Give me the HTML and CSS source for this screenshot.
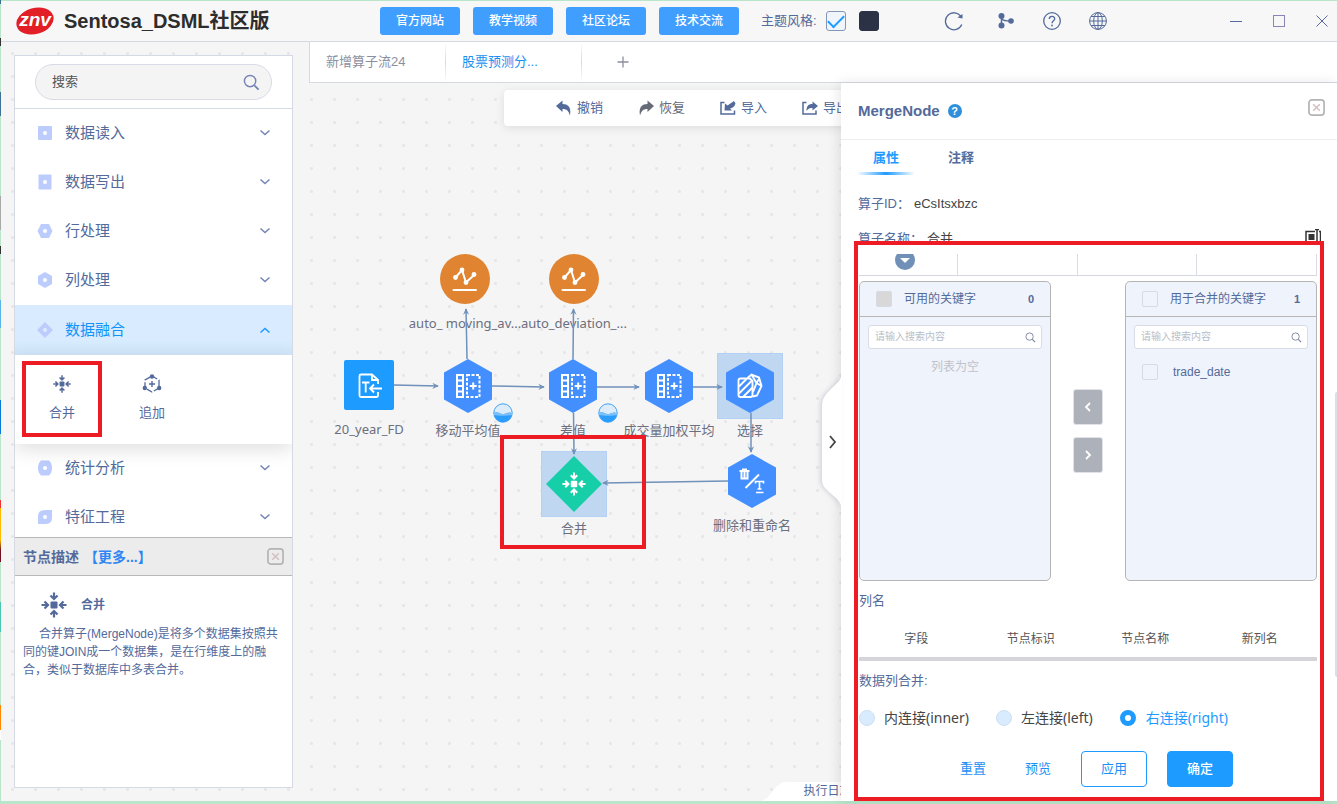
FILE: index.html
```html
<!DOCTYPE html>
<html lang="zh-CN">
<head>
<meta charset="utf-8">
<title>Sentosa_DSML社区版</title>
<link rel="stylesheet" href="styles.css">
</head>
<body>
<svg class="defs" aria-hidden="true">
  <defs>
    <symbol id="i-down" viewBox="0 0 12 8"><path d="M1.5 1.5L6 5.5L10.500 1.500" fill="none" stroke="currentColor" stroke-width="1.500"/></symbol>
    <symbol id="i-search" viewBox="0 0 18 18"><circle cx="7.500" cy="7.500" r="6" fill="none" stroke="currentColor" stroke-width="1.500"/><path d="M12 12L16.500 16.500" stroke="currentColor" stroke-width="2"/></symbol>
    <symbol id="i-merge" viewBox="0 0 26 26"><rect x="9.500" y="9.500" width="7" height="7" rx="1" fill="currentColor"/><g fill="none" stroke="currentColor" stroke-width="2.200"><path d="M13 0.500V7M9.500 3.500L13 7L16.500 3.500"/><path d="M13 25.500V19M9.500 22.500L13 19L16.500 22.500"/><path d="M0.500 13H7M3.500 9.500L7 13L3.500 16.500"/><path d="M25.500 13H19M22.500 9.500L19 13L22.500 16.500"/></g></symbol>
    <symbol id="i-close" viewBox="0 0 18 18"><rect x="1" y="1" width="16" height="16" rx="3" fill="none" stroke="#b4b4b4" stroke-width="1.800"/><path d="M5.500 5.500L12.500 12.500M12.500 5.500L5.500 12.500" stroke="#d3bfbf" stroke-width="1.500"/></symbol>
    <symbol id="i-columns" viewBox="0 0 26 26"><g fill="none" stroke="#fff" stroke-width="2"><path d="M2 2H8V24H2ZM2 7.500H8M2 13H8M2 18.500H8"/><path d="M12 2H24.500V24H12Z" stroke-dasharray="3 1.500"/><path d="M18.200 9.500V16.500M14.700 13H21.700"/></g></symbol>
    <symbol id="i-chart" viewBox="0 0 26 26"><g fill="none" stroke="#fff" stroke-width="2"><path d="M3.500 11.500L10 4L14 16.500L22 9"/><path d="M1.500 24H24" stroke-linecap="round"/></g><g fill="#fff"><circle cx="3.500" cy="11.500" r="2.400"/><circle cx="10" cy="4" r="2.400"/><circle cx="14" cy="16.500" r="2.400"/><circle cx="22" cy="8.500" r="2.400"/></g></symbol>
    <symbol id="i-hex" viewBox="0 0 48 54"><path d="M24 0L48 13.500V40.500L24 54L0 40.500V13.500Z" fill="#448fff"/></symbol>
    <symbol id="i-wave" viewBox="0 0 20 20"><circle cx="10" cy="10" r="9.200" fill="#dcecf8" stroke="#3aa0f5"/><path d="M1 10C5 7.500 7 12 11 11S16 8.500 19 10.500A9 9 0 0 1 1 10Z" fill="#2b9dff"/><path d="M1 10C5 7.500 7 12 11 11S16 8.500 19 10.500V12C15 13 6 13 1 12Z" fill="#7cc0fa"/></symbol>
    <marker id="arrow" viewBox="0 0 8 8" refX="6.500" refY="4" markerWidth="7" markerHeight="7" markerUnits="userSpaceOnUse" orient="auto"><path d="M0 0.500L7.500 4L0 7.500L2.500 4Z" fill="#6f91ba"/></marker>
  </defs>
</svg>
<div class="app">
  <header class="topbar">
    <div class="brand">
      <svg class="logo" viewBox="0 0 38 28" role="img" aria-label="znv"><ellipse cx="19" cy="14" rx="19" ry="13" transform="rotate(-16 19 14)" fill="#e21f26"/><text class="logo-text" x="19" y="19" text-anchor="middle">znv</text></svg>
      <h1 class="title">Sentosa_DSML社区版</h1>
    </div>
    <nav class="links">
      <button class="link-btn">官方网站</button>
      <button class="link-btn">教学视频</button>
      <button class="link-btn">社区论坛</button>
      <button class="link-btn">技术交流</button>
    </nav>
    <div class="theme">
      <label for="light">主题风格:</label>
      <input id="light" class="swatch light" type="checkbox" checked>
      <input class="swatch dark" type="checkbox" aria-label="深色主题">
    </div>
    <div class="tools">
      <button class="tool reload" aria-label="刷新"><svg viewBox="0 0 20 20"><path d="M17 5.500A8.500 8.500 0 1 0 17.800 13.500" fill="none" stroke="currentColor" stroke-width="1.300"/><path d="M18.500 3V7.500L13.500 6.500Z" fill="currentColor"/></svg></button>
      <button class="tool" aria-label="分支"><svg viewBox="0 0 20 20"><g fill="currentColor"><circle cx="5.500" cy="5" r="3"/><circle cx="5.500" cy="14.500" r="3"/><circle cx="15" cy="10" r="2.800"/></g><path d="M5.500 5V14.500M5.500 7C6 10 10 10 15 10" fill="none" stroke="currentColor" stroke-width="1.500"/></svg></button>
      <button class="tool" aria-label="帮助"><svg viewBox="0 0 20 20"><circle cx="10" cy="10" r="8.300" fill="none" stroke="currentColor" stroke-width="1.300"/><path d="M7.300 8C7.300 4.500 12.700 4.500 12.700 7.800C12.700 9.800 10 9.800 10 12.200" fill="none" stroke="currentColor" stroke-width="1.400"/><circle cx="10" cy="14.500" r="0.900" fill="currentColor"/></svg></button>
      <button class="tool" aria-label="语言"><svg viewBox="0 0 20 20"><g fill="none" stroke="currentColor"><circle cx="10" cy="10" r="8.400"/><ellipse cx="10" cy="10" rx="4.300" ry="8.400"/><path d="M10 1.500V18.500M1.500 10H18.500M3 5.500H17M3 14.500H17"/></g></svg></button>
    </div>
    <div class="window">
      <button class="win" aria-label="最小化"><svg viewBox="0 0 14 14"><path d="M1 7.500H13" stroke="currentColor"/></svg></button>
      <button class="win" aria-label="最大化"><svg viewBox="0 0 14 14"><rect x="1.500" y="1.500" width="11" height="11" fill="none" stroke="#8a86b4"/></svg></button>
      <button class="win" aria-label="关闭"><svg viewBox="0 0 14 14"><path d="M1.500 1.500L12.500 12.500M12.500 1.500L1.500 12.500" stroke="currentColor"/></svg></button>
    </div>
  </header>

  <main class="main">
    <aside class="sidebar">
      <div class="search">
        <div class="search-box">
          <input class="search-input" type="text" placeholder="搜索" aria-label="搜索">
          <svg class="search-icon"><use href="#i-search"/></svg>
        </div>
      </div>
      <div class="menu">
        <button class="item"><svg class="shape" viewBox="0 0 16 16"><rect x="1" y="1" width="14" height="14" rx="1"/><circle class="hole" cx="8" cy="8" r="2"/></svg><span>数据读入</span><svg class="chev"><use href="#i-down"/></svg></button>
        <button class="item"><svg class="shape" viewBox="0 0 16 16"><rect x="1.500" y="0.500" width="13" height="15" rx="1"/><circle class="hole" cx="8" cy="8" r="2"/></svg><span>数据写出</span><svg class="chev"><use href="#i-down"/></svg></button>
        <button class="item"><svg class="shape" viewBox="0 0 16 16"><path d="M4 1H12L15.500 8L12 15H4L0.500 8Z"/><circle class="hole" cx="8" cy="8" r="2"/></svg><span>行处理</span><svg class="chev"><use href="#i-down"/></svg></button>
        <button class="item"><svg class="shape" viewBox="0 0 16 16"><path d="M8 0L15 4V12L8 16L1 12V4Z"/><circle class="hole" cx="8" cy="8" r="2"/></svg><span>列处理</span><svg class="chev"><use href="#i-down"/></svg></button>
        <button class="item active"><svg class="shape" viewBox="0 0 16 16"><path d="M8 0L16 8L8 16L0 8Z"/><circle class="hole" cx="8" cy="8" r="2"/></svg><span>数据融合</span><svg class="chev up"><use href="#i-down"/></svg></button>
        <div class="submenu">
          <button class="op marked"><svg class="op-icon" viewBox="0 0 20 20"><use href="#i-merge" x="1" y="1" width="18" height="18"/></svg><span>合并</span></button>
          <button class="op"><svg class="op-icon" viewBox="0 0 20 20"><path d="M10 2L17 6V14L10 18L3 14V6Z" fill="none" stroke="currentColor" stroke-width="1.300" stroke-dasharray="6 2"/><g fill="currentColor"><circle cx="10" cy="2.500" r="2.200"/><circle cx="2.800" cy="14" r="2.200"/><circle cx="17.200" cy="14" r="2.200"/></g><path d="M10 7V13M7 10H13" stroke="currentColor" stroke-width="1.400"/></svg><span>追加</span></button>
        </div>
        <button class="item"><svg class="shape" viewBox="0 0 16 16"><path d="M4 0.500H12Q15 3 15 8T12 15.500H4Q1 13 1 8T4 0.500Z"/><circle class="hole" cx="8" cy="8" r="2"/></svg><span>统计分析</span><svg class="chev"><use href="#i-down"/></svg></button>
        <button class="item"><svg class="shape" viewBox="0 0 16 16"><path d="M1 15V7Q1 1 8 1H15V9Q15 15 8 15Z"/><circle class="hole" cx="8" cy="8" r="2"/></svg><span>特征工程</span><svg class="chev"><use href="#i-down"/></svg></button>
      </div>
      <section class="desc">
        <div class="desc-head">
          <h2 class="desc-title">节点描述</h2><a class="more" href="#">【更多...】</a>
          <button class="close" aria-label="关闭描述"><svg><use href="#i-close"/></svg></button>
        </div>
        <div class="desc-body">
          <h3 class="desc-name"><svg class="desc-icon"><use href="#i-merge"/></svg>合并</h3>
          <p class="desc-text">合并算子(MergeNode)是将多个数据集按照共同的键JOIN成一个数据集，是在行维度上的融合，类似于数据库中多表合并。</p>
        </div>
      </section>
    </aside>

    <div class="workspace">
      <div class="flows">
        <button class="flow">新增算子流24</button>
        <button class="flow current">股票预测分...</button>
        <button class="flow add" aria-label="新增"><svg viewBox="0 0 12 12"><path d="M6 0.500V11.500M0.500 6H11.500" stroke="currentColor" stroke-width="1.300"/></svg></button>
      </div>
      <div class="stage">
        <div class="canvas">
          <div class="node n-file"><span class="box"><svg width="50" height="50" viewBox="0 0 50 50"><rect width="50" height="50" rx="2" fill="#1e9bff"/><g fill="none" stroke="#fff" stroke-width="1.800"><path d="M34 24V20L28 14.500H17Q15.500 14.500 15.500 16V35.500Q15.500 37 17 37H32.500Q34 37 34 35.500V32"/><path d="M28 14.500V20H34"/><path d="M18 22.500H25.500M21.700 22.500V32.500"/><path d="M38 28.500H26.500M30 24.500L26 28.500L30 32.500"/></g></svg></span><span class="label">20_year_FD</span></div>
          <div class="node n-avg"><span class="box"><svg width="48" height="54"><use href="#i-hex"/><use href="#i-columns" x="11" y="14" width="26" height="26"/></svg></span><span class="label">移动平均值</span><svg class="wave"><use href="#i-wave"/></svg></div>
          <div class="node n-c1"><span class="box"><svg width="50" height="50"><circle cx="25" cy="25" r="25" fill="#e08431"/><use href="#i-chart" x="12" y="12" width="26" height="26"/></svg></span><span class="label">auto_ moving_av...</span></div>
          <div class="node n-diff"><span class="box"><svg width="48" height="54"><use href="#i-hex"/><use href="#i-columns" x="11" y="14" width="26" height="26"/></svg></span><span class="label">差值</span><svg class="wave"><use href="#i-wave"/></svg></div>
          <div class="node n-c2"><span class="box"><svg width="50" height="50"><circle cx="25" cy="25" r="25" fill="#e08431"/><use href="#i-chart" x="12" y="12" width="26" height="26"/></svg></span><span class="label">auto_deviation_...</span></div>
          <div class="node n-vol"><span class="box"><svg width="48" height="54"><use href="#i-hex"/><use href="#i-columns" x="11" y="14" width="26" height="26"/></svg></span><span class="label">成交量加权平均</span></div>
          <div class="node n-pick"><span class="box picked"><svg width="48" height="54"><use href="#i-hex"/><g fill="none" stroke="#fff" stroke-width="1.900"><path d="M24 19.500H14.500Q12.500 19.500 12.500 21.500V36Q12.500 38 14.500 38H24.500Q26.500 38 26.500 36V22Z"/><path d="M13 27.500L20.500 20M13 34.500L25.500 22M17.500 37.500L26.500 28.500"/><path d="M21.500 19L25.500 15.500L33 18.500L35.500 27L31 36.500L27 37.500M25.500 15.500L30.500 24L27 33M30.500 24L33.500 19M30.500 24L35.500 27"/></g></svg></span><span class="label">选择</span></div>
          <div class="node n-merge"><span class="box picked"><svg width="56" height="56" viewBox="0 0 56 56"><path d="M28 0L56 28L28 56L0 28Z" fill="#16cfa9"/><g color="#fff"><use href="#i-merge" x="16" y="16" width="24" height="24"/></g></svg></span><span class="label">合并</span></div>
          <div class="node n-drop"><span class="box"><svg width="48" height="54"><use href="#i-hex"/><g fill="none" stroke="#fff" stroke-width="2"><path d="M11.500 17H21.500M14 15.500H19M13.500 18V24.500H19.500V18M16.500 18V24"/><path d="M17.500 34L31 20.500"/><path d="M27.500 29.500V27.500H35.500V29.500M31.500 28V35M29.500 35H33.500M28 38.500H35.500" stroke-width="1.600"/></g></svg></span><span class="label">删除和重命名</span></div>
          <svg class="edges" aria-hidden="true"><g fill="none" stroke="#6f91ba" stroke-width="1.500">
            <path marker-end="url(#arrow)" d="M85 302L129 303"/><path marker-end="url(#arrow)" d="M183 303L235 304"/><path marker-end="url(#arrow)" d="M288 304L330 304"/><path marker-end="url(#arrow)" d="M384 304L413 304"/>
            <path marker-end="url(#arrow)" d="M158 276L157 226"/><path marker-end="url(#arrow)" d="M264 276L264.500 226"/><path marker-end="url(#arrow)" d="M264.500 330L265 371"/><path marker-end="url(#arrow)" d="M442 330L442 369"/><path marker-end="url(#arrow)" d="M419 398L294 400"/>
          </g></svg>
          <div class="actions">
            <button class="action"><svg viewBox="0 0 16 16"><path d="M0 6L6.500 0.500V4C12 4 15.500 7 14 15.500C12.500 11 11 9 6.500 9V12Z" fill="currentColor"/></svg>撤销</button>
            <button class="action redo"><svg viewBox="0 0 16 16"><path d="M16 6L9.500 0.500V4C4 4 0.500 7 2 15.500C3.500 11 5 9 9.500 9V12Z" fill="currentColor"/></svg>恢复</button>
            <button class="action"><svg viewBox="0 0 16 16"><path d="M4.500 2.500H1V14H14.500V10.500" fill="none" stroke="currentColor" stroke-width="1.500"/><path d="M4.500 10.500L5 3.500L7.500 5.500L14 1L15.500 3.500Q14 8 10 8.500L12 10.500Z" fill="currentColor"/></svg>导入</button>
            <button class="action"><svg viewBox="0 0 16 16"><path d="M4.500 2.500H1V14H14V10.500" fill="none" stroke="currentColor" stroke-width="1.500"/><path d="M4.500 11C4.500 5 7 4 10.500 4V1.500L16 6L10.500 10.500V8C8 8 6 8.500 4.500 11Z" fill="currentColor"/></svg>导出</button>
          </div>
          <div class="mark canvas-mark"></div>
          <button class="log">执行日志</button>
        </div>

        <section class="panel">
          <button class="handle" aria-label="收起"><svg viewBox="0 0 20 136"><path d="M20 2Q19 8 14 12L6 20Q0 26 0 34V108Q0 114 6 119L15 127Q19 131 20 136Z" fill="#fff"/><path d="M8 64L13 70L8 76" fill="none" stroke="#444" stroke-width="1.800"/></svg></button>
          <div class="panel-head">
            <h2 class="panel-title">MergeNode</h2>
            <span class="help">?</span>
            <button class="close" aria-label="关闭面板"><svg><use href="#i-close"/></svg></button>
          </div>
          <div class="tabs"><button class="tab on">属性</button><button class="tab">注释</button></div>
          <div class="fields">
            <div class="field"><span class="key">算子ID：</span><span>eCsItsxbzc</span></div>
            <div class="field cut"><span class="key">算子名称：</span><span>合并</span><svg class="rename" viewBox="0 0 16 16"><path d="M10 2.500H1V13.500H10M14 2.500H15.500V13.500H14M12 0V16M10 0.500H14M10 15.500H14" fill="none" stroke="#333" stroke-width="1.500"/><rect x="3.500" y="5" width="6" height="6" fill="#333"/></svg></div>
          </div>
          <div class="scroll">
            <div class="cells"><span class="cell"><i class="drop"></i></span><span class="cell"></span><span class="cell"></span><span class="cell"></span></div>
            <div class="transfer">
              <div class="list">
                <div class="list-head"><input id="all-a" class="tick off" type="checkbox" disabled><label for="all-a">可用的关键字</label><b class="count">0</b></div>
                <div class="filter"><input type="text" placeholder="请输入搜索内容" aria-label="搜索可用关键字"><svg><use href="#i-search"/></svg></div>
                <p class="empty">列表为空</p>
              </div>
              <div class="moves">
                <button class="move" aria-label="左移"><svg viewBox="0 0 10 10"><path d="M7 1L3 5L7 9" fill="none" stroke="#fff" stroke-width="1.800"/></svg></button>
                <button class="move" aria-label="右移"><svg viewBox="0 0 10 10"><path d="M3 1L7 5L3 9" fill="none" stroke="#fff" stroke-width="1.800"/></svg></button>
              </div>
              <div class="list">
                <div class="list-head"><input id="all-b" class="tick" type="checkbox"><label for="all-b">用于合并的关键字</label><b class="count">1</b></div>
                <div class="filter"><input type="text" placeholder="请输入搜索内容" aria-label="搜索合并关键字"><svg><use href="#i-search"/></svg></div>
                <div class="row"><input id="key-date" class="tick" type="checkbox"><label for="key-date">trade_date</label></div>
              </div>
            </div>
            <p class="caption">列名</p>
            <table class="names"><thead><tr><th>字段</th><th>节点标识</th><th>节点名称</th><th>新列名</th></tr></thead></table>
            <p class="caption">数据列合并:</p>
            <div class="joins">
              <label class="join"><input type="radio" name="join">内连接(inner)</label>
              <label class="join"><input type="radio" name="join">左连接(left)</label>
              <label class="join"><input type="radio" name="join" checked>右连接(right)</label>
            </div>
            <div class="footer">
              <button class="text-btn">重置</button><button class="text-btn">预览</button><button class="btn">应用</button><button class="btn primary">确定</button>
            </div>
          </div>
          <div class="thumb"></div>
          <div class="mark panel-mark"></div>
        </section>
      </div>
    </div>
  </main>
</div>
</body>
</html>
```
FILE: styles.css
```css
* { box-sizing: border-box; }

body {
  margin: 0;
  font: 13px/20px "Liberation Sans", "Noto Sans CJK SC", sans-serif;
  color: #536a9b;
  background: linear-gradient(#3a6f8f 0 4px, #b9e6cb 4px 38px, #333 38px 46px, #b9e6cb 46px 92px, #3f7196 92px 116px, #b9e6cb 116px 196px, #a9a9a9 196px 230px, #b9e6cb 230px 246px, #333 246px 254px, #b9e6cb 254px 300px, #5ab4e8 300px 328px, #b9e6cb 328px 400px, #0a7ad8 400px 434px, #b9e6cb 434px 500px, #e33 500px 508px, #fb0 508px 540px, #701020 550px 562px, #b9e6cb 562px 602px, #49c5b0 602px 632px, #b9e6cb 632px 705px, #f80 705px 730px, #fff 730px 740px, #b9e6cb 740px);
}

h1, h2, h3, p { margin: 0; }

button, input {
  font: inherit;
  color: inherit;
  margin: 0;
}

button {
  padding: 0;
  border: 0;
  background: none;
  cursor: pointer;
}

svg { display: block; }
.defs { position: absolute; width: 0; height: 0; }

.app {
  display: flex;
  flex-direction: column;
  height: 100vh;
  margin-left: 1px;
  border-top: 1px solid #b9e6cb;
  border-bottom: 3px solid #b9e6cb;
  background: #f5f5f5;
}

/* Top bar */
.topbar {
  display: flex;
  flex: none;
  align-items: center;
  height: 41px;
  padding: 0 8px 0 15px;
  border-bottom: 1px solid #d5d9e2;
  background: #f7f7f8;
}

.brand { display: flex; align-items: center; gap: 10px; width: 364px; }
.logo { width: 38px; height: 28px; }
.logo-text { font: italic bold 19px "Liberation Sans", sans-serif; fill: #fff; }
.title { font-size: 20px; line-height: 28px; color: #2d2d2d; white-space: nowrap; }
.links { display: flex; gap: 13px; }

.link-btn {
  width: 80px;
  height: 28px;
  border-radius: 3px;
  background: #409eff;
  color: #fff;
  font-size: 12px;
  font-weight: 500;
}

.theme { display: flex; align-items: center; margin-left: 22px; }
.theme label { margin-right: 9px; }

.swatch {
  appearance: none;
  display: grid;
  place-items: center;
  width: 20px;
  height: 20px;
  border: 1px solid #8396b8;
  border-radius: 3px;
}

.light { background: #f0f4fb; }
.light::before {
  content: "";
  width: 14px;
  height: 7px;
  border: solid #1e9bff;
  border-width: 0 0 2px 2px;
  transform: translateY(-2px) rotate(-45deg);
}
.dark { margin-left: 13px; background: #2b3245; border-color: #2b3245; }
.tools { display: flex; gap: 26px; margin-left: 65px; }
.tool svg { width: 20px; height: 20px; }
.reload { margin-right: 6px; }
.window { display: flex; gap: 29px; margin-left: auto; }
.win svg { width: 14px; height: 14px; }

/* Page body */
.main {
  display: flex;
  flex: 1;
  min-height: 0;
  background: radial-gradient(circle, #e6e6e8 1px, transparent 2px) 0 0 / 23px 23px;
}

.sidebar {
  display: flex;
  flex: none;
  flex-direction: column;
  width: 279px;
  margin: 13px 16px 13px 13px;
  border: 1px solid #d5d9e4;
  background: #fff;
}

.search { padding: 8px 20px; border-bottom: 1px solid #d5d9e4; }
.search-box {
  display: flex;
  align-items: center;
  height: 36px;
  padding: 0 11px 0 16px;
  border: 1px solid #d9dbe6;
  border-radius: 18px;
  background: #f4f4f5;
}
.search-input { flex: 1; min-width: 0; padding: 0; border: 0; background: none; outline: 0; }
.search-input::placeholder { color: #555; opacity: 1; }
.search-icon { width: 17px; height: 17px; color: #7583b5; }

.menu { flex: none; height: 428px; overflow: hidden; }
.item {
  display: flex;
  align-items: center;
  width: 100%;
  height: 49px;
  padding: 0 21px 2px 22px;
  font-size: 15px;
}
.shape { width: 16px; height: 16px; margin-right: 12px; fill: #bccdfd; }
.hole { fill: #fff; }
.chev { width: 12px; height: 8px; margin-left: auto; color: #7584b5; }
.up { transform: rotate(180deg); color: #1e9bff; }
.active { height: 50px; padding-bottom: 0; background: linear-gradient(#d8ebff 35px, #d0e5f9); color: #0f93fb; }
.active .hole { fill: #dcebff; }

.submenu {
  position: relative;
  display: flex;
  gap: 10px;
  height: 89px;
  padding: 6px 7px;
  background: #fff;
  box-shadow: 0 6px 18px rgba(0, 0, 0, .12);
}
.op {
  display: flex;
  flex-direction: column;
  align-items: center;
  width: 80px;
  height: 76px;
  padding-top: 13px;
  gap: 9px;
}
.op-icon { width: 20px; height: 20px; }
.marked { border: 4px solid #ed1c24; padding-top: 9px; }

.desc { flex: 1; }
.desc-head {
  display: flex;
  align-items: center;
  height: 39px;
  padding: 0 8px;
  border: solid #b8b8b8;
  border-width: 1px 0;
  background: #ececec;
  font-weight: bold;
}
.desc-title { font-size: 14px; }
.more { margin-left: 5px; color: #2e86f5; font-size: 14px; text-decoration: none; }
.close { margin-left: auto; }
.close svg { width: 17px; height: 17px; }
.desc-body { padding: 14px 8px; font-size: 12px; line-height: 18px; }
.desc-name { display: flex; align-items: center; gap: 14px; height: 30px; padding-left: 18px; font-size: 12px; }
.desc-icon { width: 26px; height: 26px; }
.desc-text { padding-top: 5px; text-indent: 16px; }

/* Flow tabs */
.workspace { display: flex; flex: 1; flex-direction: column; min-width: 0; }
.flows {
  display: flex;
  flex: none;
  height: 41px;
  border: solid #d5d9e2;
  border-width: 0 0 1px 1px;
  background: #fff;
}
.flow {
  width: 136px;
  padding-left: 16px;
  text-align: left;
  color: #8b90a0;
  border-right: 1px solid;
  border-image: linear-gradient(#fff, #d5d9e8, #fff) 1;
}
.current { color: #1890f0; }
.add { border: 0; padding-left: 35px; }
.add svg { width: 12px; height: 12px; }

/* Canvas */
.stage { display: flex; flex: 1; min-height: 0; }
.canvas { position: relative; flex: 1; min-width: 0; overflow: hidden; }
.node {
  position: absolute;
  display: flex;
  flex-direction: column;
  align-items: center;
  width: 66px;
  font: 13px/22px "Noto Sans", "Noto Sans CJK SC", sans-serif;
  color: #6c6f80;
}
.box { display: grid; place-items: center; width: 66px; height: 66px; }
.picked { background: #bfd7f0; border: 1px solid #b4d0f5; }
.label { white-space: nowrap; }
.wave { position: absolute; left: 58px; top: 50px; width: 20px; height: 20px; }
.wave use { width: 20px; height: 20px; }
.edges { position: absolute; left: 0; top: 0; width: 100%; height: 100%; pointer-events: none; }
.n-file { left: 27px; top: 269px; }
.n-avg { left: 126px; top: 270px; }
.n-c1 { left: 123px; top: 163px; }
.n-diff { left: 231px; top: 270px; }
.n-c2 { left: 232px; top: 163px; }
.n-vol { left: 327px; top: 270px; }
.n-pick { left: 408px; top: 270px; }
.n-merge { left: 232px; top: 368px; }
.n-drop { left: 410px; top: 365px; }

.actions {
  position: absolute;
  left: 195px;
  top: 7px;
  display: flex;
  gap: 35px;
  height: 36px;
  padding: 0 52px;
  border-radius: 4px;
  background: #fff;
  box-shadow: 0 2px 10px rgba(0, 0, 0, .1);
}
.action { display: flex; align-items: center; gap: 5px; padding-bottom: 1px; white-space: nowrap; }
.action svg { width: 16px; height: 16px; }
.redo { color: #676b78; }

.mark { position: absolute; border: 4px solid #ed1c24; pointer-events: none; }
.canvas-mark { left: 191px; top: 352px; width: 146px; height: 114px; }
.log {
  position: absolute;
  right: -52px;
  bottom: 0;
  width: 131px;
  height: 19px;
  background: #fff;
  clip-path: polygon(0 100%, 5px 16px, 14px 5px, 19px 1px, 24px 0, 107px 0, 112px 1px, 117px 5px, 126px 16px, 100% 100%);
  font-size: 12px;
  line-height: 19px;
}

/* Property panel */
.panel {
  position: relative;
  display: flex;
  flex: none;
  flex-direction: column;
  width: 496px;
  background: #fff;
  box-shadow: -2px 0 12px rgba(0, 0, 0, .1);
}
.handle { position: absolute; left: -19px; top: 289px; filter: drop-shadow(-2px 0 2px rgba(80, 90, 130, .2)); }
.handle svg { width: 20px; height: 136px; }
.panel-head {
  display: flex;
  align-items: center;
  height: 57px;
  padding: 0 12px 0 17px;
  border-bottom: 1px solid #eee;
}
.panel-title { font-size: 15px; }
.help {
  width: 14px;
  height: 14px;
  margin-left: 8px;
  border-radius: 7px;
  background: #2f8fda;
  color: #fff;
  font-size: 11px;
  font-weight: bold;
  line-height: 14px;
  text-align: center;
}
.panel-head .close { align-self: flex-start; margin-top: 16px; }
.tabs { display: flex; gap: 19px; padding-left: 17px; }
.tab { width: 56px; height: 35px; padding-top: 3px; font-weight: bold; border-bottom: 3px solid transparent; }
.on { color: #1e9bff; border-image: linear-gradient(90deg, #fff, #1e9bff, #fff) 1; }
.fields { padding: 11px 16px 0 17px; }
.field { display: flex; align-items: center; height: 36px; color: #444; }
.field.cut { height: 25px; padding-top: 7px; overflow: hidden; align-items: flex-start; }
.key { min-width: 56px; color: #536a9b; }
.cut .key { margin-right: 4px; }
.rename { flex: none; width: 16px; height: 16px; margin-left: auto; }
.scroll { padding: 7px 20px 0 18px; }
.cells { display: grid; grid-template-columns: 99fr 119fr 119fr 119fr; height: 22px; overflow: hidden; border-bottom: 1px solid #d5d8de; }
.cell { border-right: 1px solid #d9dce6; }
.drop {
  display: grid;
  place-items: center;
  width: 20px;
  height: 20px;
  margin: -4px 0 0 36px;
  border-radius: 10px;
  background: #7190b7;
}
.drop::before { content: ""; border: solid transparent; border-width: 5px 5px 0; border-top-color: #fff; }

.transfer { display: flex; justify-content: space-between; margin-top: 5px; }
.list { width: 192px; height: 300px; border: 1px solid #b5b5b5; border-radius: 5px; background: #eff3fb; font-size: 12px; }
.list-head { display: flex; align-items: center; height: 35px; padding: 0 16px; border-bottom: 1px solid #b5b5b5; }
.list-head label { margin-left: 12px; font-size: 12px; }
.count { margin-left: auto; font-size: 11px; }
.tick { appearance: none; width: 16px; height: 16px; border: 1px solid #d7dae5; border-radius: 2px; }
.off { background: #d8d8d8; }
.filter {
  display: flex;
  align-items: center;
  height: 24px;
  margin: 8px;
  padding: 0 5px 0 6px;
  border: 1px solid #d9dce6;
  border-radius: 3px;
  background: #fff;
}
.filter input { flex: 1; min-width: 0; padding: 0; border: 0; outline: 0; font-size: 10px; }
.filter input::placeholder { color: #b9bdc7; opacity: 1; }
.filter svg { width: 11px; height: 11px; color: #7c859b; }
.empty { text-align: center; color: #bfc2c9; }
.row { display: flex; align-items: center; gap: 15px; height: 24px; margin-top: 11px; padding: 0 16px; }
.moves { display: flex; flex-direction: column; gap: 12px; padding-top: 108px; }
.move { display: grid; place-items: center; width: 30px; height: 36px; border: 1px solid #e0e2e8; border-radius: 3px; background: #adb1b9; }
.move svg { width: 10px; height: 10px; }
.caption { padding: 10px 0 9px; }
.names { width: 100%; table-layout: fixed; border-collapse: collapse; border-bottom: 4px solid #d5d5d9; }
.names th { height: 39px; padding: 0; color: #555; font-size: 12px; font-weight: normal; }
.joins { display: flex; gap: 27px; font: 14px/20px "Noto Sans", "Noto Sans CJK SC", sans-serif; color: #444; padding-top: 8px; }
.join { display: flex; align-items: center; gap: 9px; }
.join input { appearance: none; width: 16px; height: 16px; border: 1px solid #cfdff0; border-radius: 8px; background: #d8ebff; }
.join input:checked { border: 5px solid #1e9bff; background: #fff; }
.join:has(:checked) { gap: 10px; color: #1e9bff; }
.footer { display: flex; align-items: center; margin-top: 23px; padding-left: 101px; color: #1e8ff5; }
.text-btn { margin-right: 39px; }
.btn { width: 66px; height: 36px; border: 1px solid #1e9bff; border-radius: 4px; }
.text-btn + .btn { margin-left: -9px; }
.primary { margin-left: 20px; background: #1e9bff; color: #fff; font-weight: 500; }
.thumb { position: absolute; right: 0; top: 309px; width: 2px; height: 285px; border-radius: 2px 0 0 2px; background: #dcdfeb; }
.panel-mark { left: 13px; right: 13px; top: 158px; bottom: 0; }
```
